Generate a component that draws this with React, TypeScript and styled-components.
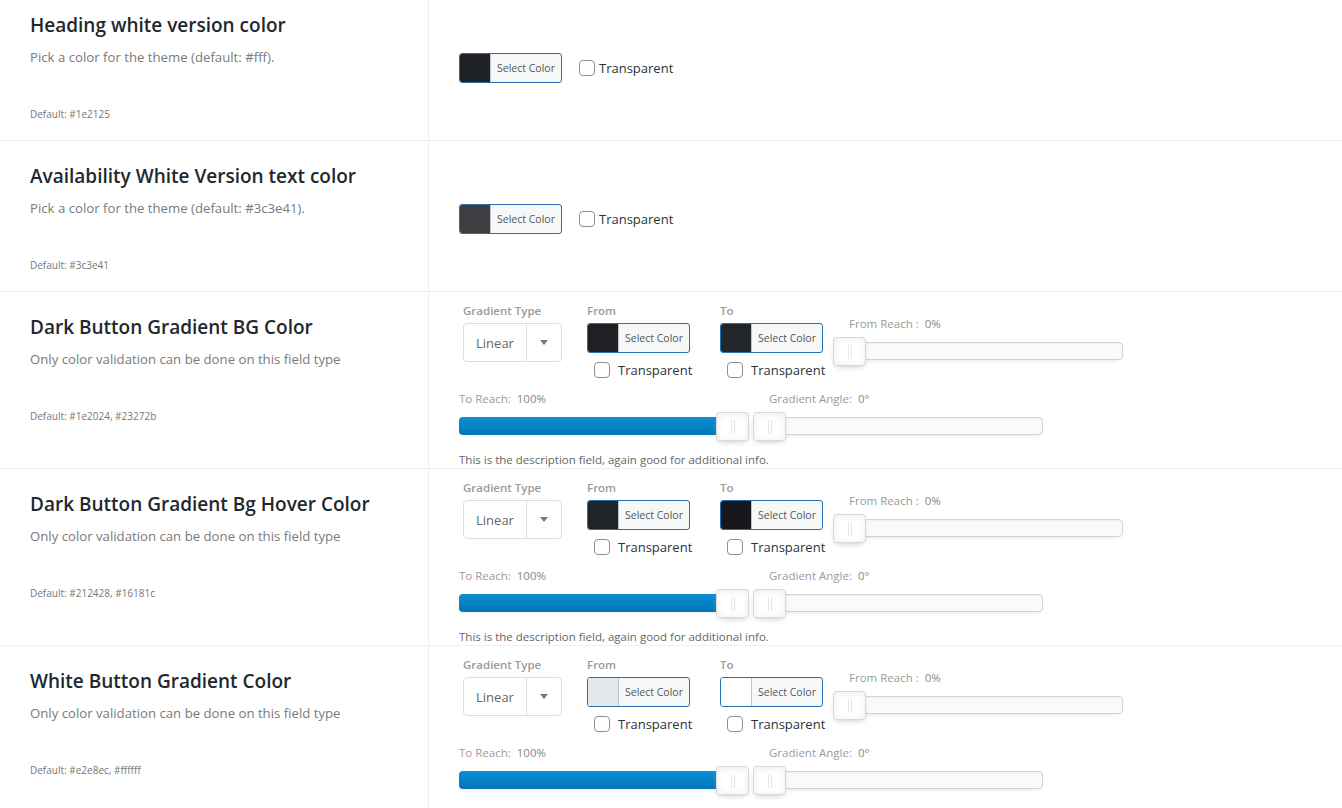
import styled, { createGlobalStyle } from 'styled-components';

const GlobalStyle = createGlobalStyle`
  html, body {
    margin: 0;
    padding: 0;
    background: #fff;
  }
  body {
    font-family: 'Open Sans', 'Noto Sans', sans-serif;
    color: #3c434a;
    overflow: hidden;
  }
`;

const Page = styled.div`
  width: 1342px;
  margin-top: -10px;
`;

const Row = styled.div`
  display: grid;
  grid-template-columns: 429px 1fr;
  border-bottom: 1px solid #f0f0f1;
`;

const InfoCell = styled.div`
  border-right: 1px solid #f0f0f1;
  padding: 21px 30px 18px;
`;

const Title = styled.h3`
  margin: 0 0 8px;
  font-size: 19px;
  line-height: 28px;
  font-weight: 600;
  color: #23282d;
`;

const Desc = styled.p`
  margin: 0;
  font-size: 13.2px;
  line-height: 21px;
  color: #7a7a7a;
`;

const DefaultText = styled.div`
  margin-top: 38px;
  font-size: 10px;
  line-height: 16px;
  color: #777;
`;

const FieldCell = styled.div<{ $gradient?: boolean }>`
  display: flex;
  flex-direction: column;
  justify-content: ${({ $gradient }) => ($gradient ? 'flex-start' : 'center')};
  padding: ${({ $gradient }) => ($gradient ? '10px 30px 0' : '6px 30px 0')};
`;

const Inline = styled.div`
  display: flex;
  align-items: center;
  gap: 17px;
`;

const ColorButton = styled.div`
  display: flex;
  width: 103px;
  height: 30px;
  box-sizing: border-box;
  border: 1px solid #2271b1;
  border-radius: 3px;
  overflow: hidden;
  background: #f6f7f7;
`;

const Swatch = styled.span<{ $color: string }>`
  width: 30px;
  flex: none;
  background: ${({ $color }) => $color};
  border-right: 1px solid #c3c4c7;
`;

const ButtonText = styled.span`
  flex: 1;
  display: flex;
  align-items: center;
  justify-content: center;
  font-size: 10.5px;
  color: #50575e;
  white-space: nowrap;
`;

const Check = styled.label<{ $gap: number; $indent?: number }>`
  display: flex;
  align-items: center;
  gap: ${({ $gap }) => $gap}px;
  margin-left: ${({ $indent }) => $indent ?? 0}px;
  font-size: 13px;
  line-height: 18px;
  color: #2c3338;
  white-space: nowrap;
`;

const Box = styled.span`
  width: 16px;
  height: 16px;
  box-sizing: border-box;
  border: 1px solid #8c8f94;
  border-radius: 4px;
  background: #fff;
  flex: none;
`;

const TopLine = styled.div`
  display: flex;
  align-items: flex-start;
  padding-left: 4px;
`;

const Field = styled.div<{ $width: number }>`
  width: ${({ $width }) => $width}px;
  flex: none;
  display: flex;
  flex-direction: column;
`;

const FieldLabel = styled.div`
  font-size: 11.5px;
  line-height: 18px;
  font-weight: 600;
  color: #9a9a9a;
  margin-bottom: 3px;
`;

const Select = styled.div`
  width: 99px;
  height: 39px;
  box-sizing: border-box;
  border: 1px solid #ddd;
  border-radius: 4px;
  display: flex;
  background: #fff;
`;

const SelectValue = styled.span`
  width: 62px;
  display: flex;
  align-items: center;
  justify-content: center;
  font-size: 13px;
  color: #666;
  border-right: 1px solid #ddd;
`;

const SelectArrow = styled.span`
  flex: 1;
  display: flex;
  align-items: center;
  justify-content: center;
  &::after {
    content: '';
    border-left: 4px solid transparent;
    border-right: 4px solid transparent;
    border-top: 5px solid #777;
  }
`;

const UnderCheck = styled.div`
  margin-top: 8px;
`;

const SliderField = styled.div<{ $top?: number }>`
  width: 290px;
  flex: none;
  padding-top: ${({ $top }) => $top ?? 0}px;
`;

const SliderLabel = styled.div<{ $indent: number }>`
  margin-left: ${({ $indent }) => $indent}px;
  font-size: 11.5px;
  line-height: 18px;
  color: #9a9a9a;
  margin-bottom: 9px;
  white-space: pre;
  b {
    font-weight: 400;
    color: #888;
  }
`;

const Track = styled.div`
  position: relative;
  height: 18px;
  box-sizing: border-box;
  border: 1px solid #d3d3d3;
  border-radius: 4px;
  background: #fafafa;
  box-shadow: inset 0 1px 1px #f0f0f0, 0 3px 6px -5px #bbb;
`;

const Fill = styled.div`
  position: absolute;
  left: -1px;
  top: -1px;
  bottom: -1px;
  border-radius: 4px 0 0 4px;
  background: linear-gradient(#0b8fd4, #0075b7);
`;

const Handle = styled.div`
  position: absolute;
  top: -6px;
  width: 33px;
  height: 29px;
  box-sizing: border-box;
  border: 1px solid #d9d9d9;
  border-radius: 3px;
  background: #fff;
  box-shadow: inset 0 0 1px #fff, inset 0 1px 7px #ebebeb, 0 3px 6px -3px #bbb;
  &::before,
  &::after {
    content: '';
    position: absolute;
    top: 7px;
    width: 1px;
    height: 14px;
    background: #e8e7e6;
  }
  &::before {
    left: 14px;
  }
  &::after {
    left: 17px;
  }
`;

const BottomLine = styled.div`
  display: flex;
  gap: 4px;
  margin-top: 11px;
`;

const Note = styled.div`
  margin-top: 16px;
  font-size: 11.5px;
  line-height: 17px;
  color: #666;
`;

type SliderProps = { label: string; value: number; indent: number; top?: number; filled?: boolean };

const Slider = ({ label, value, indent, top, filled }: SliderProps) => {
  const pos = (value / 100) * (290 - 33);
  const valueText = label.startsWith('Gradient') ? `${value}°` : `${value}%`;
  return (
    <SliderField $top={top}>
      <SliderLabel $indent={indent}>
        {label}  <b>{valueText}</b>
      </SliderLabel>
      <Track>
        {filled && <Fill style={{ width: pos + 17 }} />}
        <Handle style={{ left: pos - 1 }} />
      </Track>
    </SliderField>
  );
};

const ColorPick = ({ color }: { color: string }) => (
  <ColorButton>
    <Swatch $color={color} />
    <ButtonText>Select Color</ButtonText>
  </ColorButton>
);

type Info = { title: string; desc: string; def: string };

const InfoBlock = ({ title, desc, def }: Info) => (
  <InfoCell>
    <Title>{title}</Title>
    <Desc>{desc}</Desc>
    <DefaultText>Default: {def}</DefaultText>
  </InfoCell>
);

const SimpleRow = ({ color, ...info }: Info & { color: string }) => (
  <Row>
    <InfoBlock {...info} />
    <FieldCell>
      <Inline>
        <ColorPick color={color} />
        <Check $gap={4}>
          <Box />
          Transparent
        </Check>
      </Inline>
    </FieldCell>
  </Row>
);

const GradientRow = ({ from, to, ...info }: Info & { from: string; to: string }) => (
  <Row>
    <InfoBlock {...info} />
    <FieldCell $gradient>
      <TopLine>
        <Field $width={124}>
          <FieldLabel>Gradient Type</FieldLabel>
          <Select>
            <SelectValue>Linear</SelectValue>
            <SelectArrow />
          </Select>
        </Field>
        <Field $width={133}>
          <FieldLabel>From</FieldLabel>
          <ColorPick color={from} />
          <UnderCheck>
            <Check $gap={8} $indent={7}>
              <Box />
              Transparent
            </Check>
          </UnderCheck>
        </Field>
        <Field $width={113}>
          <FieldLabel>To</FieldLabel>
          <ColorPick color={to} />
          <UnderCheck>
            <Check $gap={8} $indent={7}>
              <Box />
              Transparent
            </Check>
          </UnderCheck>
        </Field>
        <Slider label="From Reach :" value={0} indent={16} top={13} />
      </TopLine>
      <BottomLine>
        <Slider label="To Reach:" value={100} indent={0} filled />
        <Slider label="Gradient Angle:" value={0} indent={16} />
      </BottomLine>
      <Note>This is the description field, again good for additional info.</Note>
    </FieldCell>
  </Row>
);

const App = () => (
  <>
    <GlobalStyle />
    <Page>
      <SimpleRow
        title="Heading white version color"
        desc="Pick a color for the theme (default: #fff)."
        def="#1e2125"
        color="#1e2125"
      />
      <SimpleRow
        title="Availability White Version text color"
        desc="Pick a color for the theme (default: #3c3e41)."
        def="#3c3e41"
        color="#3c3e41"
      />
      <GradientRow
        title="Dark Button Gradient BG Color"
        desc="Only color validation can be done on this field type"
        def="#1e2024, #23272b"
        from="#1e2024"
        to="#23272b"
      />
      <GradientRow
        title="Dark Button Gradient Bg Hover Color"
        desc="Only color validation can be done on this field type"
        def="#212428, #16181c"
        from="#212428"
        to="#16181c"
      />
      <GradientRow
        title="White Button Gradient Color"
        desc="Only color validation can be done on this field type"
        def="#e2e8ec, #ffffff"
        from="#e2e8ec"
        to="#ffffff"
      />
    </Page>
  </>
);

export default App;
